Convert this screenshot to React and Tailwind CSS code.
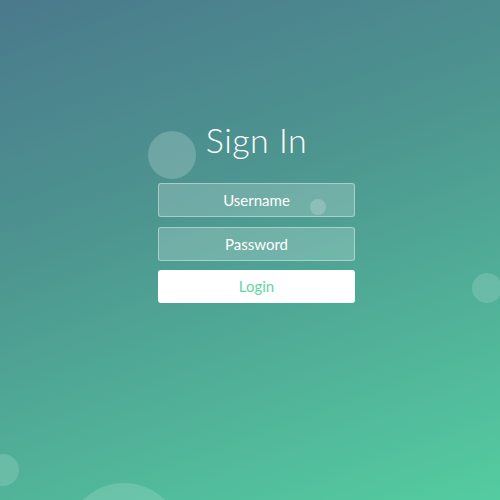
export default function App() {
  return (
    <div
      className="relative w-[500px] h-[500px] overflow-hidden bg-[linear-gradient(160deg,#4a798c_0%,#4d9690_40%,#54cca0_100%)]"
      style={{ fontFamily: "Lato, 'Open Sans', sans-serif" }}
    >
      {/* bubbles */}
      <div className="absolute left-[148px] top-[131px] w-[48px] h-[48px] rounded-full bg-white/20" />
      <div className="absolute left-[310px] top-[199px] w-[16px] h-[16px] rounded-full bg-white/20" />
      <div className="absolute left-[472px] top-[273px] w-[30px] h-[30px] rounded-full bg-white/15" />
      <div className="absolute left-[-13px] top-[454px] w-[32px] h-[32px] rounded-full bg-white/15" />
      <div className="absolute left-[66px] top-[483px] w-[116px] h-[116px] rounded-full bg-white/15" />

      <div className="relative flex flex-col items-center pt-[118px] pl-[13px]">
        <h1 className="text-[34px] leading-[44px] font-light text-white tracking-[0.5px]">Sign In</h1>
        <div className="flex flex-col gap-[10px] mt-[21px] w-[197px]">
          <div className="h-[34px] rounded-[3px] border border-white/40 bg-white/20 flex items-center justify-center text-white text-[15px]">
            Username
          </div>
          <div className="h-[34px] rounded-[3px] border border-white/40 bg-white/20 flex items-center justify-center text-white text-[15px]">
            Password
          </div>
          <button className="h-[33px] -mt-[1px] rounded-[3px] bg-white flex items-center justify-center text-[#5fd6a2] text-[15px]">
            Login
          </button>
        </div>
      </div>
    </div>
  );
}
